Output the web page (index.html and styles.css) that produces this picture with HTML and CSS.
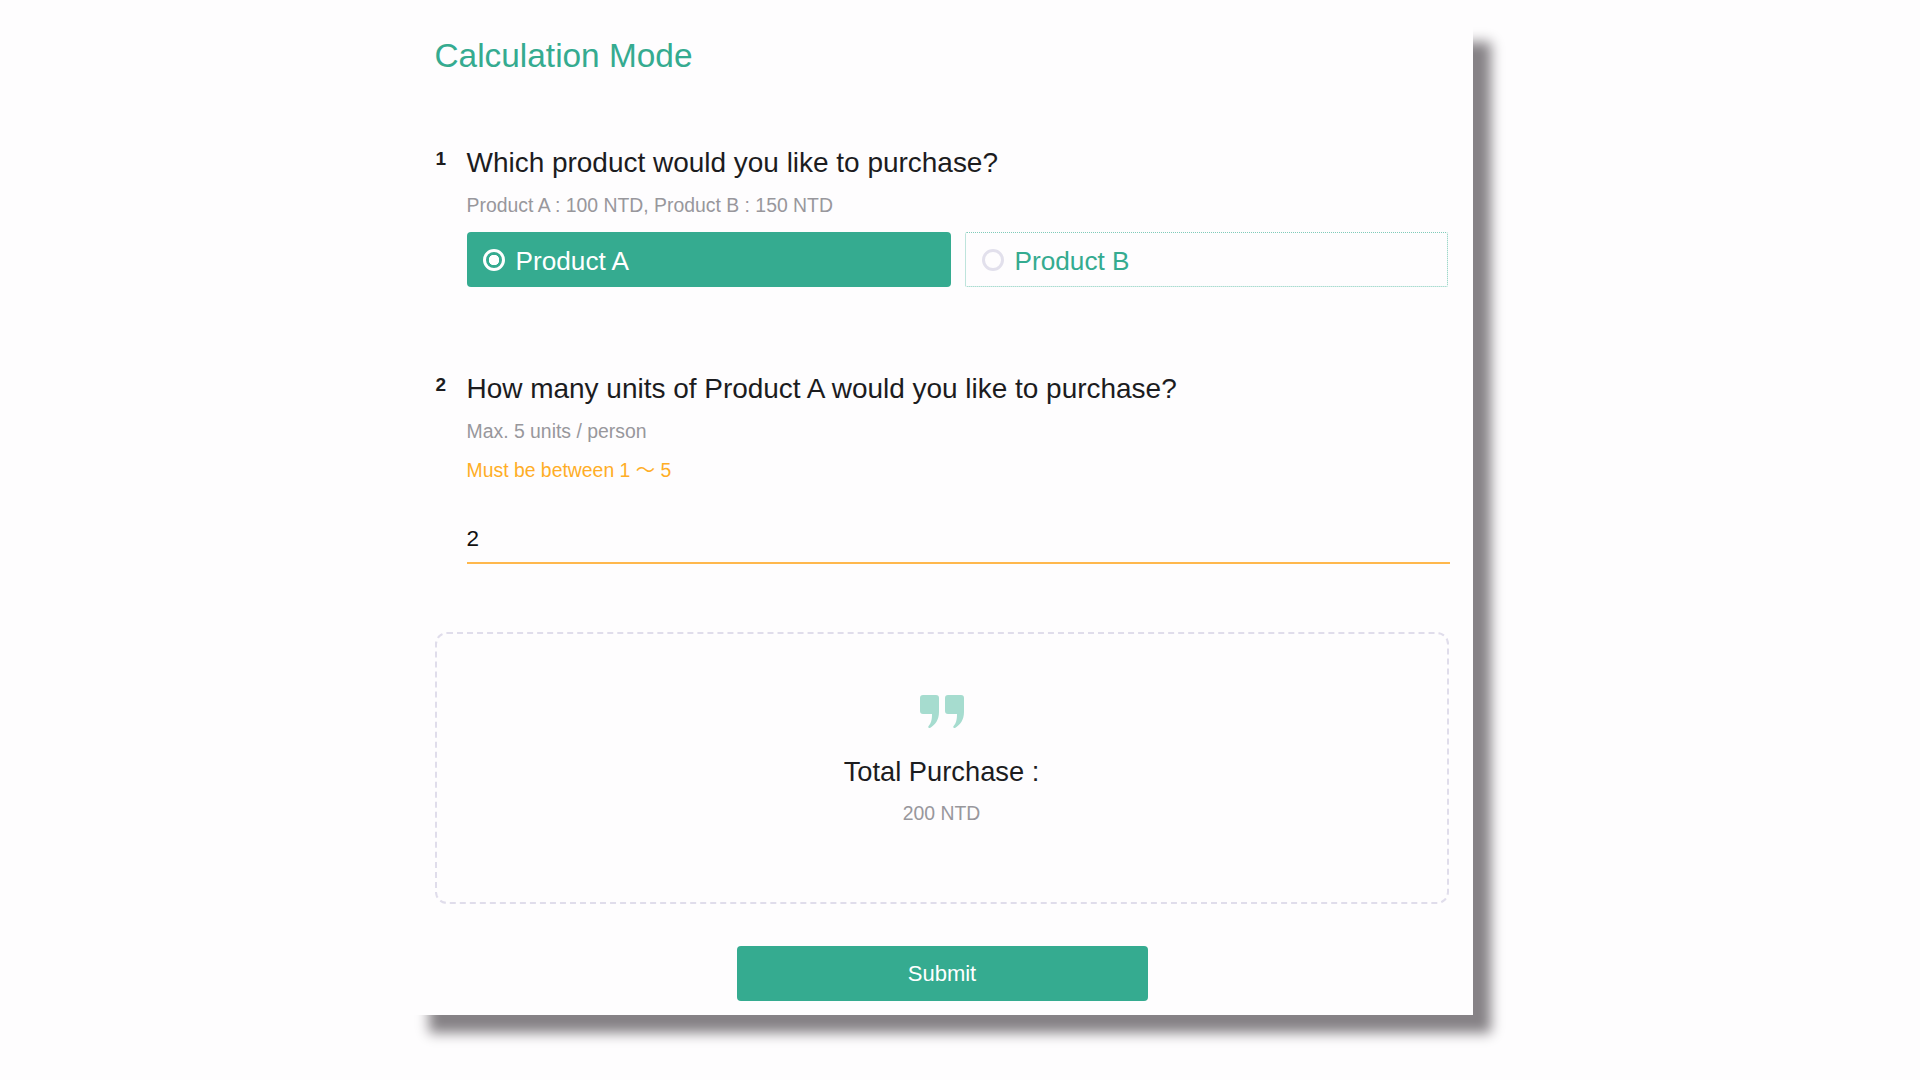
FILE: index.html
```html
<!DOCTYPE html>
<html lang="en">
<head>
    <meta charset="UTF-8" />
    <title>Calculation Mode</title>
    <link rel="stylesheet" href="styles.css">
</head>
<body>
    <div class="panel">
        <h1 class="title">Calculation Mode</h1>

        <!-- Question 1 -->
        <div class="question question-first">
            <span class="question-num">1</span>
            <div class="question-body">
                <h2>Which product would you like to purchase?</h2>
                <p class="hint">Product A : 100 NTD, Product B : 150 NTD</p>
                <div class="options">
                    <div class="option option-active"><span class="radio"></span><span class="option-label">Product A</span></div>
                    <div class="option"><span class="radio"></span><span class="option-label">Product B</span></div>
                </div>
            </div>
        </div>

        <!-- Question 2 -->
        <div class="question question-second">
            <span class="question-num">2</span>
            <div class="question-body">
                <h2>How many units of Product A would you like to purchase?</h2>
                <p class="hint">Max. 5 units / person</p>
                <p class="hint warning">Must be between 1 〜 5</p>
                <input class="units" type="text" value="2" />
            </div>
        </div>

        <!-- Result -->
        <div class="result">
            <svg class="quote" width="44" height="33" viewBox="0 0 44 33">
                <path d="M3 0H16a3 3 0 0 1 3 3V17C19 25 15 30 10 33C8.5 33.5 7.5 32 9 30.5C11 28 12 25 12 19H3a3 3 0 0 1-3-3V3a3 3 0 0 1 3-3Z"/>
                <path transform="translate(25 0)" d="M3 0H16a3 3 0 0 1 3 3V17C19 25 15 30 10 33C8.5 33.5 7.5 32 9 30.5C11 28 12 25 12 19H3a3 3 0 0 1-3-3V3a3 3 0 0 1 3-3Z"/>
            </svg>
            <h2>Total Purchase :</h2>
            <p class="hint">200 NTD</p>
        </div>

        <button class="submit">Submit</button>
    </div>
</body>
</html>
```

FILE: styles.css
```css
body {
    margin: 0;
    height: 1080px;
    overflow: hidden;
    background: #fefdfe;
    font-family: "Liberation Sans", Arial, "Noto Sans CJK JP", sans-serif;
    color: #1c1c1e;
}

h1, h2, p {
    margin: 0;
    font-weight: normal;
}

.panel {
    width: 1062px;
    height: 991px;
    margin: 24px 0 0 411px;
    padding: 12px 0 0 24.5px;
    box-sizing: border-box;
    background: #fefdfe;
    box-shadow: 18px 18px 12px #868286;
}

.title {
    font-size: 33.4px;
    line-height: 40px;
    margin-left: -1px;
    color: #35ab90;
}

.question {
    display: flex;
    width: 1014.5px;
}

.question-first {
    margin-top: 71px;
}

.question-second {
    margin-top: 86px;
}

.question-num {
    width: 31px;
    font-size: 19px;
    font-weight: bold;
    line-height: 24px;
    flex-shrink: 0;
}

.question-body {
    flex: 1;
}

.question-body h2 {
    font-size: 28px;
    line-height: 32px;
    letter-spacing: -0.02px;
}

.hint {
    margin-top: 14px;
    font-size: 19.4px;
    line-height: 24px;
    color: #98979c;
}

.warning {
    margin-top: 15px;
    color: #ffad26;
}

.options {
    display: flex;
    gap: 14px;
    margin: 15px 2px 0 0;
}

.option {
    flex: 1;
    display: flex;
    align-items: center;
    height: 55px;
    padding-left: 16px;
    box-sizing: border-box;
    border: 1px dotted #7fcbb9;
    border-radius: 2px;
    font-size: 26.2px;
    color: #35ab90;
}

.option-label {
    padding-top: 3px;
}

.option-active {
    flex: 0 0 484px;
    background: #35ab90;
    border: none;
    border-radius: 4px;
    color: #fff;
}

.radio {
    width: 22px;
    height: 22px;
    margin-right: 11px;
    box-sizing: border-box;
    border: 3px solid #e2e0ec;
    border-radius: 50%;
    flex-shrink: 0;
}

.option-active .radio {
    border-color: #fff;
    background: radial-gradient(circle, #fff 0 5px, transparent 5.5px);
}

.units {
    display: block;
    width: 100%;
    height: 47px;
    margin-top: 35px;
    padding: 0 0 2px;
    box-sizing: border-box;
    border: none;
    border-bottom: 2px solid #ffb84d;
    background: transparent;
    outline: none;
    font-family: inherit;
    font-size: 22.5px;
    color: #111;
}

.result {
    display: flex;
    flex-direction: column;
    align-items: center;
    width: 1014px;
    height: 272px;
    margin: 68px 0 0 -1px;
    padding-top: 61px;
    box-sizing: border-box;
    border: 2px dashed #e0ddeb;
    border-radius: 12px;
}

.quote {
    fill: #a6dccf;
}

.result h2 {
    margin-top: 28px;
    font-size: 27.3px;
    line-height: 32px;
}

.result .hint {
    margin-top: 13px;
}

.submit {
    display: block;
    width: 411px;
    height: 55px;
    margin: 42px 0 0 301px;
    padding-bottom: 1px;
    border: none;
    border-radius: 4px;
    background: #35ab90;
    color: #fff;
    font-family: inherit;
    font-size: 22px;
}
```
